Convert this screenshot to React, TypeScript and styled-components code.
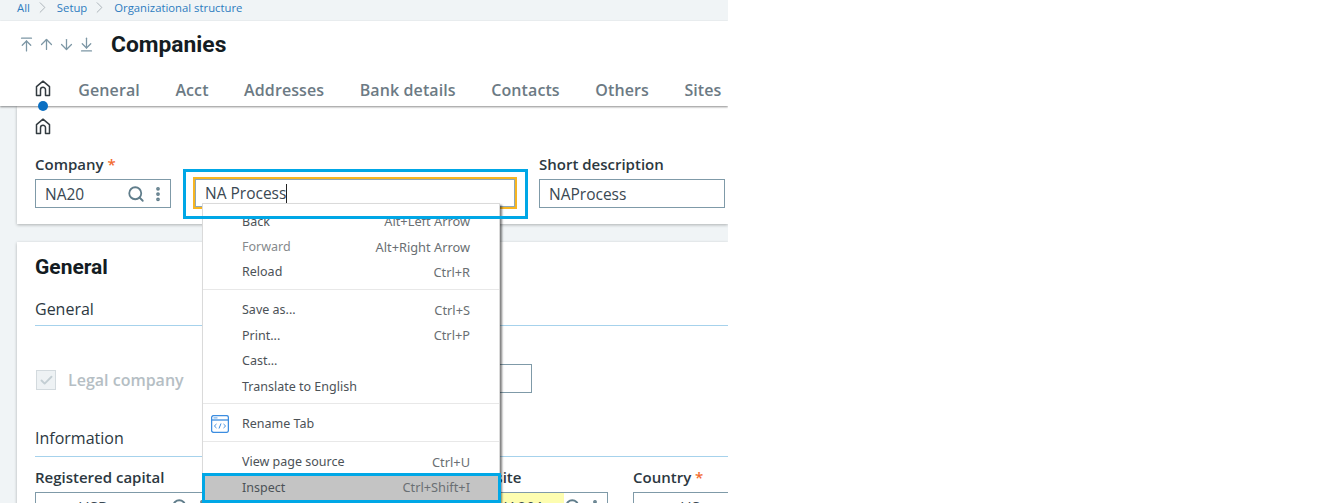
import { ArrowDown, ArrowDownToLine, ArrowUp, ArrowUpToLine, Check, ChevronRight, EllipsisVertical, Search } from "lucide-react";
import styled, { createGlobalStyle } from "styled-components";

const crumbs = ["All", "Setup", "Organizational structure"];
const tabs = ["General", "Acct", "Addresses", "Bank details", "Contacts", "Others", "Sites"];

const menuGroups = [
  [
    { label: "Back", keys: "Alt+Left Arrow" },
    { label: "Forward", keys: "Alt+Right Arrow", muted: true },
    { label: "Reload", keys: "Ctrl+R" },
  ],
  [
    { label: "Save as...", keys: "Ctrl+S" },
    { label: "Print...", keys: "Ctrl+P" },
    { label: "Cast..." },
    { label: "Translate to English" },
  ],
  [{ label: "Rename Tab", icon: true }],
  [{ label: "View page source", keys: "Ctrl+U" }, { label: "Inspect", keys: "Ctrl+Shift+I", active: true }],
];

function HomeIcon() {
  return (
    <svg width="16" height="17" viewBox="0 0 16 17" fill="none" stroke="#333b40" strokeWidth="1.5">
      <path d="M1.5 15.5V6.6L8 1.2l6.5 5.4v8.9h-4V9.8a2.5 2.5 0 0 0-5 0v5.7z" strokeLinejoin="round" />
    </svg>
  );
}

function CodeTabIcon() {
  return (
    <svg width="18" height="18" viewBox="0 0 18 18" fill="none" stroke="#3c8de0" strokeWidth="1.3">
      <rect x="0.6" y="0.6" width="16.8" height="16.8" rx="2" />
      <path d="M0.6 5h16.8" />
      <path d="M2.5 2.9h4" strokeWidth="0.8" />
      <path d="M5.5 9 3.4 11l2.1 2M12.5 9l2.1 2-2.1 2M10 8.5 8 13.5" strokeWidth="1" />
    </svg>
  );
}

function App() {
  return (
    <Page>
      <GlobalStyle />
      <Sheet>
        <Breadcrumb>
          {crumbs.map((crumb, i) => (
            <Crumb key={crumb}>
              {i > 0 && <ChevronRight size={19} strokeWidth={1.2} color="#a9b1b6" />}
              <span>{crumb}</span>
            </Crumb>
          ))}
        </Breadcrumb>

        <Header>
          <TitleRow>
            <Arrows>
              <ArrowUpToLine size={17} strokeWidth={1.8} />
              <ArrowUp size={17} strokeWidth={1.8} />
              <ArrowDown size={17} strokeWidth={1.8} />
              <ArrowDownToLine size={17} strokeWidth={1.8} />
            </Arrows>
            <Title>Companies</Title>
          </TitleRow>
          <Tabs>
            <HomeTab>
              <HomeIcon />
              <ActiveDot />
            </HomeTab>
            {tabs.map((tab) => (
              <Tab key={tab}>{tab}</Tab>
            ))}
          </Tabs>
        </Header>

        <Body>
          <TopCard>
            <HomeRow>
              <HomeIcon />
            </HomeRow>
            <TopFields>
              <Field $width={136}>
                <Label>
                  Company <Star>*</Star>
                </Label>
                <InputBox>
                  <Value>NA20</Value>
                  <FieldIcons />
                </InputBox>
              </Field>
              <FocusedInput>
                <Value>NA Process</Value>
                <Caret />
              </FocusedInput>
              <Field $width={186}>
                <Label>Short description</Label>
                <InputBox>
                  <Value>NAProcess</Value>
                </InputBox>
              </Field>
            </TopFields>
          </TopCard>

          <MainCard>
            <CardTitle>General</CardTitle>
            <SectionTitle>General</SectionTitle>
            <LegalRow>
              <Legal>
                <CheckBox>
                  <Check size={15} strokeWidth={3} color="#c3ced3" />
                </CheckBox>
                <LegalLabel>Legal company</LegalLabel>
              </Legal>
              <StubInput />
            </LegalRow>
            <InfoTitle>Information</InfoTitle>
            <InfoGrid>
              <Field>
                <Label>Registered capital</Label>
                <InputBox>
                  <ClippedValue $indent={0}>aa</ClippedValue>
                  <ClippedValue $indent={16}>USD</ClippedValue>
                  <FieldIcons />
                </InputBox>
              </Field>
              <SiteField>
                <Label>Financial site</Label>
                <SiteBox>
                  <YellowPart>
                    <ClippedValue $indent={0}>NA201</ClippedValue>
                  </YellowPart>
                  <FieldIcons />
                </SiteBox>
              </SiteField>
              <Field>
                <Label>
                  Country <Star>*</Star>
                </Label>
                <InputBox>
                  <ClippedValue $indent={7}>aa</ClippedValue>
                  <ClippedValue $indent={13}>US</ClippedValue>
                </InputBox>
              </Field>
            </InfoGrid>
          </MainCard>
        </Body>
      </Sheet>

      <ContextMenu>
        {menuGroups.map((group, i) => (
          <MenuGroup key={i}>
            {i > 0 && <MenuSeparator />}
            {group.map((item) => (
              <MenuItem key={item.label} $active={"active" in item && item.active}>
                <MenuIconSlot>{"icon" in item && <CodeTabIcon />}</MenuIconSlot>
                <MenuLabel $muted={"muted" in item && item.muted}>{item.label}</MenuLabel>
                {"keys" in item && <MenuKeys>{item.keys}</MenuKeys>}
              </MenuItem>
            ))}
          </MenuGroup>
        ))}
      </ContextMenu>

      <InputHighlight />
      <InspectHighlight />
    </Page>
  );
}

function FieldIcons() {
  return (
    <IconGroup>
      <Search size={18} strokeWidth={2.4} />
      <EllipsisVertical size={18} strokeWidth={3} />
    </IconGroup>
  );
}

export default App;

const GlobalStyle = createGlobalStyle`
  html, body {
    margin: 0;
    padding: 0;
    background: #fff;
  }
  * {
    box-sizing: border-box;
  }
`;

const Page = styled.div`
  position: relative;
  width: 1338px;
  height: 503px;
  overflow: hidden;
  background: #fff;
  font-family: "Open Sans", "Liberation Sans", sans-serif;
`;

const Sheet = styled.div`
  width: 728px;
  height: 503px;
  overflow: hidden;
  background: #f0f4f6;
`;

const Breadcrumb = styled.div`
  height: 21px;
  padding-left: 17px;
  display: flex;
  gap: 3px;
  font-size: 11.3px;
  line-height: 15px;
  color: #2d7cc0;
`;

const Crumb = styled.div`
  display: flex;
  align-items: center;
  height: 15px;
  gap: 5px;
`;

const Header = styled.header`
  position: relative;
  z-index: 1;
  height: 85px;
  background: #fff;
  box-shadow: 0 1px 2px rgba(0, 0, 0, 0.45);
`;

const TitleRow = styled.div`
  height: 46px;
  padding-left: 18px;
  display: flex;
  align-items: center;
`;

const Arrows = styled.div`
  width: 93px;
  display: flex;
  gap: 3px;
  color: #7d97a5;
`;

const Title = styled.h1`
  margin: 0;
  font-family: Roboto, "Liberation Sans", sans-serif;
  font-size: 22.8px;
  font-weight: 700;
  color: #141c22;
`;

const Tabs = styled.nav`
  height: 39px;
  padding-left: 35px;
  display: flex;
  align-items: center;
  gap: 35.5px;
`;

const HomeTab = styled.div`
  position: relative;
  width: 16px;
  margin-right: -8.2px;
  height: 17px;
  align-self: flex-start;
  margin-top: 13px;
`;

const ActiveDot = styled.span`
  position: absolute;
  left: 3px;
  top: 21px;
  width: 10px;
  height: 10px;
  border-radius: 50%;
  background: #0a6fc2;
`;

const Tab = styled.div`
  margin-top: 7px;
  font-size: 16px;
  font-weight: 600;
  letter-spacing: 0.1px;
  color: #6c7a84;
`;

const Body = styled.div`
  padding-left: 17px;
  display: flex;
  flex-direction: column;
  gap: 18px;
`;

const Card = styled.section`
  background: #fff;
  padding-left: 18px;
  box-shadow: 0 1px 3px rgba(0, 0, 0, 0.28);
`;

const TopCard = styled(Card)`
  height: 118px;
`;

const HomeRow = styled.div`
  height: 38px;
  padding-top: 12px;
`;

const TopFields = styled.div`
  display: flex;
  align-items: flex-end;
  gap: 22px;
  margin-top: 11px;
`;

const Field = styled.div<{ $width?: number }>`
  width: ${(p) => (p.$width ? `${p.$width}px` : "auto")};
  min-width: 0;
  display: flex;
  flex-direction: column;
`;

const Label = styled.div`
  height: 24px;
  font-size: 15px;
  line-height: 19px;
  font-weight: 600;
  white-space: nowrap;
  color: #2c3841;
`;

const Star = styled.span`
  color: #f26b2f;
`;

const InputBox = styled.div`
  height: 29px;
  padding: 0 3px 0 9px;
  display: flex;
  align-items: center;
  background: #fff;
  border: 1px solid #7f9aa8;
`;

const Value = styled.span`
  font-size: 15.5px;
  color: #3a4852;
  white-space: nowrap;
`;

const ClippedValue = styled(Value)<{ $indent: number }>`
  margin-left: ${(p) => p.$indent}px;
  align-self: flex-start;
  margin-top: 4px;
`;

const IconGroup = styled.div`
  margin-left: auto;
  display: flex;
  align-items: center;
  gap: 4px;
  color: #607d8b;
`;

const FocusedInput = styled.div`
  width: 324px;
  height: 32px;
  margin-bottom: -1px;
  padding-left: 10px;
  display: flex;
  align-items: center;
  border: 2px solid #f7b521;
  box-shadow: inset 0 0 0 1px #8fa7b3;
`;

const Caret = styled.span`
  width: 1px;
  height: 19px;
  background: #222;
`;

const MainCard = styled(Card)`
  height: 300px;
  padding-top: 13px;
`;

const CardTitle = styled.h2`
  margin: 0;
  height: 25px;
  font-family: Roboto, "Liberation Sans", sans-serif;
  font-size: 21px;
  line-height: 24px;
  font-weight: 700;
  color: #141c22;
`;

const SectionTitle = styled.h3`
  margin: 18px 0 0;
  height: 28px;
  font-size: 16px;
  line-height: 22px;
  font-weight: 500;
  color: #2c3841;
  border-bottom: 1.5px solid #a6d2ec;
`;

const LegalRow = styled.div`
  width: 497px;
  margin-top: 38px;
  display: flex;
  align-items: center;
  justify-content: space-between;
`;

const Legal = styled.div`
  display: flex;
  align-items: center;
  gap: 12px;
  margin-top: 3px;
`;

const CheckBox = styled.div`
  width: 20px;
  height: 20px;
  margin-left: 1px;
  display: flex;
  align-items: center;
  justify-content: center;
  background: #eef2f4;
  border: 1px solid #d3dade;
`;

const LegalLabel = styled.span`
  font-size: 16px;
  font-weight: 600;
  color: #b5bec4;
`;

const StubInput = styled.div`
  width: 200px;
  height: 29px;
  border: 1px solid #7f9aa8;
`;

const InfoTitle = styled(SectionTitle)`
  margin-top: 34px;
  height: 30px;
`;

const InfoGrid = styled.div`
  margin-top: 11px;
  display: grid;
  grid-template-columns: 180px 162px 181px 186px;
  column-gap: 25px;
`;

const SiteField = styled(Field)`
  grid-column: 3;
`;

const SiteBox = styled(InputBox)`
  padding-left: 0;
`;

const YellowPart = styled.div`
  width: 136px;
  height: 100%;
  padding-right: 20px;
  display: flex;
  justify-content: flex-end;
  background: #fdfdb0;
`;

const ContextMenu = styled.div`
  position: absolute;
  left: 202px;
  top: 203px;
  width: 298px;
  height: 311px;
  padding-top: 4.5px;
  background: #fff;
  border: 1px solid #dadada;
  box-shadow: 2px 2px 2px rgba(0, 0, 0, 0.5);
  font-family: "Noto Sans", "Open Sans", sans-serif;
  font-size: 12.5px;
  color: #555;
`;

const MenuGroup = styled.div``;

const MenuSeparator = styled.div`
  height: 1.5px;
  margin: 4px 0 7px;
  background: #e8e8e8;
`;

const MenuItem = styled.div<{ $active?: boolean }>`
  height: 25.4px;
  padding: 0 29px 0 8px;
  display: flex;
  align-items: center;
  background: ${(p) => (p.$active ? "#c4c4c4" : "transparent")};
`;

const MenuIconSlot = styled.div`
  width: 31px;
  display: flex;
  align-items: center;
`;

const MenuLabel = styled.span<{ $muted?: boolean }>`
  color: ${(p) => (p.$muted ? "#85898c" : "#4c5257")};
`;

const MenuKeys = styled.span`
  margin-left: auto;
  font-size: 12.8px;
  color: #6a6f73;
`;

const InputHighlight = styled.div`
  position: absolute;
  left: 183px;
  top: 169px;
  width: 345px;
  height: 50px;
  border: 3px solid #00a7e6;
`;

const InspectHighlight = styled.div`
  position: absolute;
  left: 202px;
  top: 473px;
  width: 299px;
  height: 30px;
  border: 3px solid #00a7e6;
`;
